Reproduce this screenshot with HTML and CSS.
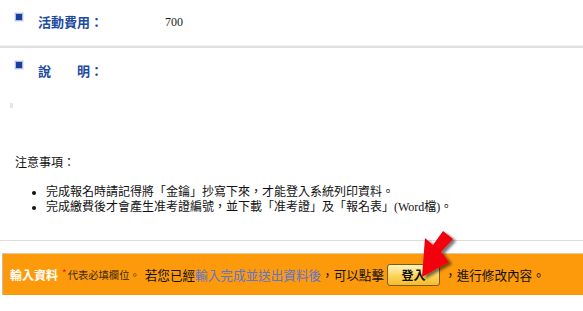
FILE: index.html
```html
<!DOCTYPE html>
<html lang="zh-Hant">
<head>
<meta charset="utf-8">
<link rel="stylesheet" href="styles.css">
</head>
<body>
<div class="page">
  <div class="field field-first">
    <span class="dot"></span>
    <span class="label">活動費用：</span>
    <span class="value">700</span>
  </div>
  <div class="sep"></div>
  <div class="field field-second">
    <span class="dot"></span>
    <span class="label">說　　明：</span>
  </div>
  <div class="speck"></div>
  <div class="notice">
    <div class="notice-title">注意事項：</div>
    <ul class="notice-list">
      <li>完成報名時請記得將「金鑰」抄寫下來，才能登入系統列印資料。</li>
      <li>完成繳費後才會產生准考證編號，並下載「准考證」及「報名表」(Word檔)。</li>
    </ul>
  </div>
  <div class="rule"></div>
  <div class="bar">
    <span class="bar-title">輸入資料</span>
    <span class="req">*</span>
    <span class="req-text">代表必填欄位。</span>
    <span class="bar-text">若您已經<span class="bar-link">輸入完成並送出資料後</span>，可以點擊</span>
    <button class="login-btn" type="button">登入</button>
    <span class="bar-text">，進行修改內容。</span>
  </div>
  <svg class="arrow" width="50" height="60" viewBox="0 0 50 60" aria-hidden="true">
    <defs>
      <filter id="sh" x="-30%" y="-30%" width="160%" height="160%">
        <feGaussianBlur in="SourceAlpha" stdDeviation="1.6"/>
        <feOffset dx="3" dy="2" result="b"/>
        <feComponentTransfer><feFuncA type="linear" slope="0.55"/></feComponentTransfer>
        <feMerge><feMergeNode/><feMergeNode in="SourceGraphic"/></feMerge>
      </filter>
    </defs>
    <polygon filter="url(#sh)" fill="#f2060b" points="7,49 10,10 18,17 28,3 38,11 26,24 34,34"/>
  </svg>
</div>
</body>
</html>
```
FILE: styles.css
```css
html, body {
  margin: 0;
  padding: 0;
  background: #ffffff;
}
body {
  width: 583px;
  height: 311px;
  overflow: hidden;
  font-family: "Noto Sans CJK TC", "Noto Sans", sans-serif;
}
.page {
  position: relative;
  width: 583px;
  height: 311px;
}
.field {
  display: flex;
  align-items: flex-start;
  padding-left: 15px;
}
.field-first {
  height: 32px;
  padding-top: 13px;
}
.field-second {
  height: 30px;
  padding-top: 13px;
}
.dot {
  width: 6px;
  height: 6px;
  background: #1b3e9c;
  border: 1px solid #a9bde8;
  box-shadow: 0 0 0 1px #e6edf9;
  flex: none;
}
.label {
  margin-left: 15px;
  margin-top: 2px;
  width: 127px;
  font-size: 13px;
  line-height: 15px;
  font-weight: bold;
  color: #1d4b9f;
  flex: none;
}
.field-first .label {
  margin-top: 1px;
}
.value {
  margin-top: 2px;
  font-family: "Liberation Serif", serif;
  font-size: 12px;
  line-height: 14px;
  color: #222;
}
.sep {
  height: 2px;
  background: #e0e0e0;
  border-top: 1px solid #f3f3f3;
}
.speck {
  margin: 12px 0 0 10px;
  width: 3px;
  height: 5px;
  background: #e6e6e6;
}
.notice {
  margin-top: 46px;
  padding-left: 15px;
  font-family: "Liberation Serif", "Noto Sans CJK TC", serif;
  font-size: 12px;
  line-height: 15px;
  color: #111;
}
.notice-title {
  font-family: "Noto Sans CJK TC", sans-serif;
}
.notice-list {
  margin: 16px 0 0 0;
  padding-left: 31px;
}
.notice-list li {
  line-height: 15px;
}
.rule {
  margin-top: 25px;
  height: 1px;
  background: #dcdcdc;
}
.bar {
  margin: 12px 0 0 2px;
  height: 41px;
  background: #fd9a0c;
  border-top: 1px solid #e3c9a0;
  border-left: 1px solid #d0bba0;
  display: flex;
  align-items: center;
  padding-left: 7px;
  white-space: nowrap;
}
.bar-title {
  color: #ffffff;
  font-weight: bold;
  font-size: 12px;
}
.req {
  color: #e8141b;
  font-size: 10px;
  margin-left: 4px;
  margin-top: -4px;
}
.req-text {
  font-size: 10.3px;
  color: #3a2a10;
  margin-left: 1px;
}
.bar-text {
  font-size: 12.6px;
  color: #111;
  margin-left: 5px;
}
.bar-link {
  color: #5e74cf;
}
.bar-text + .login-btn {
  margin-left: 3px;
}
.login-btn {
  width: 53px;
  height: 22px;
  padding: 0;
  margin: 0;
  border: 1px solid #7b5c17;
  border-radius: 3px;
  background: linear-gradient(#fff5c2, #fcd45a 55%, #f5bb2c);
  font-family: "Noto Sans CJK TC", sans-serif;
  font-size: 12px;
  font-weight: bold;
  color: #111;
  line-height: 20px;
}
.login-btn + .bar-text {
  margin-left: 4px;
}
.arrow {
  position: absolute;
  left: 415px;
  top: 228px;
}
```
